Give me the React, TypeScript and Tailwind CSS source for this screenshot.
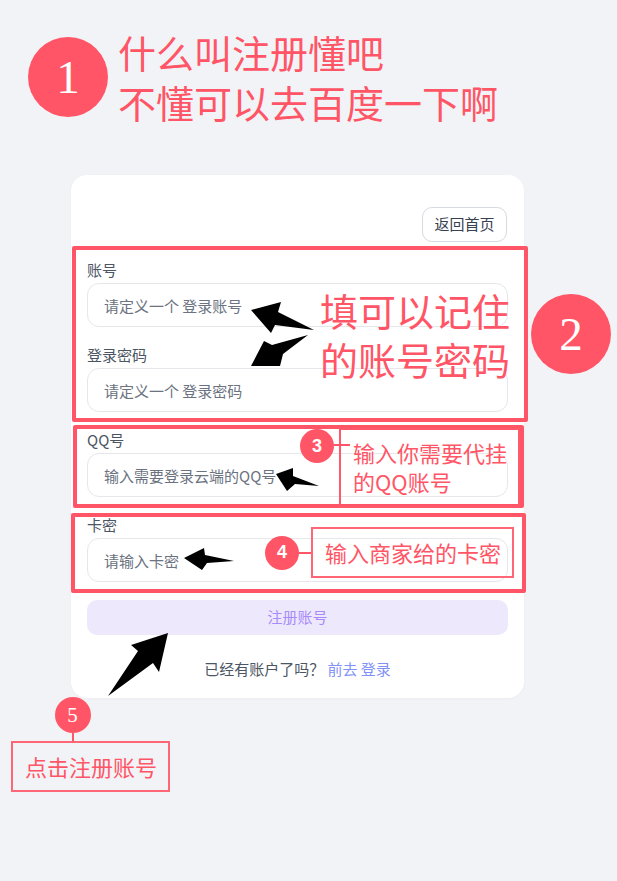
import React from "react";

const cjk = { fontFamily: '"Noto Sans CJK SC", "Noto Sans", sans-serif' };
const serif = { fontFamily: '"Liberation Serif", "DejaVu Serif", serif' };
const sans = { fontFamily: '"Liberation Sans", Arial, sans-serif' };

function Field({ label, placeholder }: { label: string; placeholder: string }) {
  return (
    <div className="mt-[18px] flex flex-col gap-[3px]">
      <div className="h-5 text-[15px] leading-5 text-[#4b5563]">{label}</div>
      <input
        className="h-[44px] w-full rounded-[12px] border border-[#e5e7eb] bg-white pl-[16px] text-[15px] text-[#374151] outline-none placeholder:text-[#6b7280]"
        placeholder={placeholder}
        style={cjk}
      />
    </div>
  );
}

export default function App() {
  return (
    <div className="relative min-h-[881px] w-full overflow-hidden bg-[#f2f3f7]" style={cjk}>
      {/* heading */}
      <div className="flex items-center gap-[10px] pl-[28px] pt-[27px]">
        <div
          className="flex h-20 w-20 shrink-0 items-center justify-center rounded-full bg-[#ff5566] text-[47px] leading-none text-white"
          style={serif}
        >
          1
        </div>
        <div className="text-[38px] leading-[50px] text-[#ff5566]">
          <div>什么叫注册懂吧</div>
          <div>不懂可以去百度一下啊</div>
        </div>
      </div>

      {/* card */}
      <div className="ml-[71px] mt-[48px] w-[453px] rounded-[16px] bg-white px-[16px] pb-[19px] pt-[32px] shadow-[0_1px_3px_rgba(0,0,0,0.03)]">
        <div className="flex justify-end pr-[1px]">
          <button className="h-[35px] w-[85px] rounded-[10px] border border-[#d7d9e0] bg-white text-[15px] text-[#374151]">
            返回首页
          </button>
        </div>
        <Field label="账号" placeholder="请定义一个 登录账号" />
        <Field label="登录密码" placeholder="请定义一个 登录密码" />
        <Field label="QQ号" placeholder="输入需要登录云端的QQ号" />
        <Field label="卡密" placeholder="请输入卡密" />
        <button className="mt-[18px] h-[35px] w-full rounded-[10px] bg-[#eee8fd] text-[15px] text-[#a78bfa]">
          注册账号
        </button>
        <div className="mt-[24px] text-center text-[15px] leading-5 text-[#4b5563]">
          已经有账户了吗？ <span className="text-[#8191f5]">前去 登录</span>
        </div>
      </div>

      {/* highlight frames */}
      <div className="pointer-events-none absolute left-[72px] top-[246px] h-[176px] w-[456px] rounded-[2px] border-[4px] border-[#ff5566]" />
      <div className="pointer-events-none absolute left-[73px] top-[425px] h-[83px] w-[451px] rounded-[2px] border-[4px] border-[#ff5566]" />
      <div className="pointer-events-none absolute left-[71px] top-[513px] h-[80px] w-[455px] rounded-[2px] border-[4px] border-[#ff5566]" />

      {/* callout 2 */}
      <div className="absolute left-[320px] top-[285px] flex items-center gap-[21px]">
        <div className="text-[38px] leading-[49px] text-[#ff5566]">
          <div>填可以记住</div>
          <div>的账号密码</div>
        </div>
        <div
          className="flex h-20 w-20 items-center justify-center rounded-full bg-[#ff5566] text-[47px] leading-none text-white"
          style={serif}
        >
          2
        </div>
      </div>

      {/* callout 3 */}
      <div className="absolute left-[300px] top-[428px] flex items-start">
        <div
          className="mt-[1px] flex h-[34px] w-[34px] shrink-0 items-center justify-center rounded-full bg-[#ff5566] text-[18px] font-bold text-white"
          style={sans}
        >
          3
        </div>
        <div className="relative z-10 mr-[-11px] mt-[16px] h-[2px] w-[16px] bg-[#ff5566]" />
        <div className="h-[80px] w-[181px] border-2 border-[#ff5a6b] pl-[12px] pt-[8px] text-[22px] leading-[29px] text-[#ff5566]">
          <div>输入你需要代挂</div>
          <div>的QQ账号</div>
        </div>
      </div>

      {/* callout 4 */}
      <div className="absolute left-[265px] top-[527px] flex items-center">
        <div
          className="flex h-[34px] w-[34px] shrink-0 items-center justify-center rounded-full bg-[#ff5566] text-[18px] font-bold text-white"
          style={sans}
        >
          4
        </div>
        <div className="h-[2px] w-[12px] bg-[#ff5566]" />
        <div className="flex h-[51px] w-[203px] items-center border-2 border-[#ff6676] pl-[12px] text-[22px] text-[#ff5566]">
          输入商家给的卡密
        </div>
      </div>

      {/* callout 5 */}
      <div className="absolute left-[11px] top-[697px] flex flex-col items-start">
        <div className="flex w-[123px] flex-col items-center">
          <div
            className="flex h-[36px] w-[36px] items-center justify-center rounded-full bg-[#ff5566] text-[21px] leading-none text-white"
            style={serif}
          >
            5
          </div>
          <div className="h-[8px] w-[2px] bg-[#ff5566]" />
        </div>
        <div className="flex h-[51px] w-[159px] items-center border-2 border-[#ff6676] pl-[12px] text-[22px] text-[#ff5566]">
          点击注册账号
        </div>
      </div>

      {/* arrows */}
      <svg className="pointer-events-none absolute left-0 top-0" width="617" height="881" viewBox="0 0 617 881">
        <polygon points="251,310 281,302 278,312 314,330 275,325 271,333" fill="#000" />
        <polygon points="251,366 264,341 272,345 308,335 283,354 280,366" fill="#000" />
        <polygon points="276,474 293,468 293,476 319,486 295,484 287,491" fill="#000" />
        <polygon points="184,558 204,548 205,555 234,561 207,563 202,570" fill="#000" />
        <polygon points="168,633 131,645 138,651 108,696 153,663 159,672" fill="#000" />
      </svg>
    </div>
  );
}
